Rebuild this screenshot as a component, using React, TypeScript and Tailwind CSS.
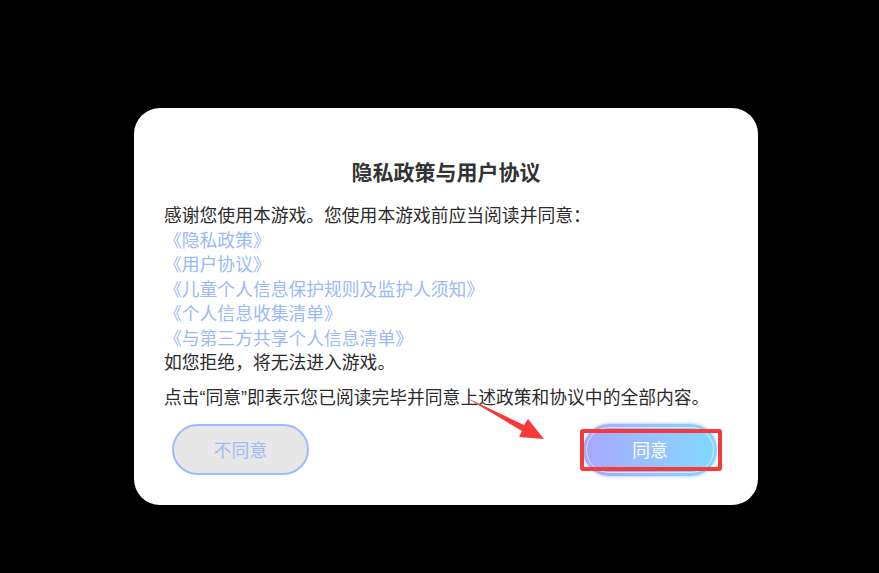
import React from 'react';

const links = [
  '《隐私政策》',
  '《用户协议》',
  '《儿童个人信息保护规则及监护人须知》',
  '《个人信息收集清单》',
  '《与第三方共享个人信息清单》',
];

export default function App() {
  return (
    <div
      className="relative w-full h-[573px] bg-black overflow-hidden pl-[134px] pt-[108px]"
      style={{ fontFamily: '"Noto Sans CJK SC", "Noto Sans", sans-serif' }}
    >
      {/* Dialog card */}
      <div className="w-[624px] h-[397px] bg-white rounded-[26px] px-[30px] pt-[49px]">
        <h2 className="text-center text-[21px] leading-[28px] font-bold text-[#333333]">隐私政策与用户协议</h2>

        <div className="mt-[17px] text-[17.8px] leading-[24.5px] text-[#2b2b2b]">
          <p>感谢您使用本游戏。您使用本游戏前应当阅读并同意：</p>
          {links.map((l) => (
            <p key={l} className="text-[#99baf7]">{l}</p>
          ))}
          <p>如您拒绝，将无法进入游戏。</p>
        </div>

        <p className="mt-[10.5px] text-[17.8px] leading-[24.5px] text-[#2b2b2b]">
          点击<span className="font-['Liberation_Sans']">“</span>同意<span className="font-['Liberation_Sans']">”</span>即表示您已阅读完毕并同意上述政策和协议中的全部内容。
        </p>

        <div className="mt-[13px] ml-[8px] mr-[11px] flex items-center justify-between">
          <button className="w-[137px] h-[51px] rounded-full bg-[#e7e7e7] border-2 border-[#9cbcff] text-[#9dbcf6] text-[17.8px]">
            不同意
          </button>
          <button className="relative w-[134px] h-[52px] rounded-full bg-gradient-to-r from-[#a6a8ff] to-[#80d8ff] text-white text-[17.8px] shadow-[0_0_3px_1px_rgba(150,190,255,0.6)]">
            <span className="absolute inset-[3px] rounded-full border border-white/60" />
            <span className="relative">同意</span>
          </button>
        </div>
      </div>

      {/* Annotation: red highlight box */}
      <div className="absolute left-[580px] top-[429px] w-[142px] h-[42px] border-4 border-[#f53a3a] rounded-[3px]" />

      {/* Annotation: red arrow */}
      <svg className="absolute left-0 top-0" width="879" height="573" viewBox="0 0 879 573">
        <polygon
          points="465,397 524,425 528,419 544,439 519,437 522,431"
          fill="#f53a3a"
        />
      </svg>
    </div>
  );
}
